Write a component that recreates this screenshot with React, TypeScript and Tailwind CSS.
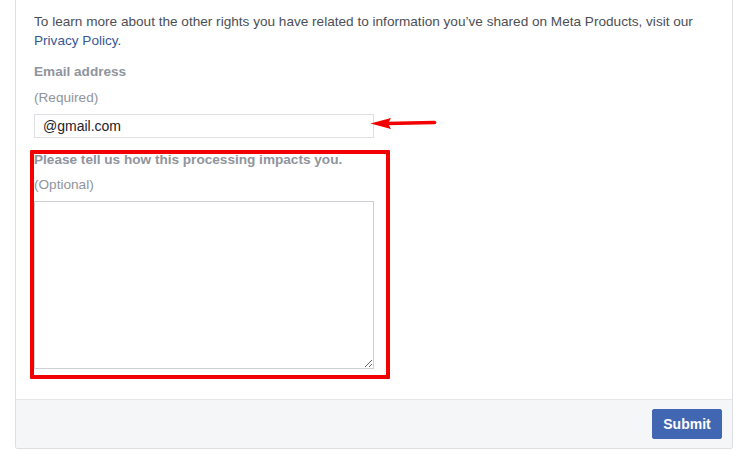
import React from 'react';

const font = { fontFamily: '"Liberation Sans", Arial, Helvetica, sans-serif' };

function Arrow() {
  return (
    <svg
      className="absolute left-[368px] top-[114px]"
      width="70"
      height="20"
      viewBox="0 0 70 20"
    >
      <path d="M 18 9.5 L 66.5 8.5" stroke="#f20000" strokeWidth="3.6" strokeLinecap="round" fill="none" />
      <path d="M 2.5 9.5 L 23 4 L 20 9.5 L 23 15 Z" fill="#f20000" />
    </svg>
  );
}

export default function App() {
  return (
    <div className="min-h-[467px] w-[750px] bg-white" style={font}>
      <div className="relative ml-[15px] w-[718px] rounded-b-[3px] border-x border-b border-[#dddfe2]">
        <div className="px-[18px] pt-[12px] pb-[30px] text-[13.6px] leading-[19px]">
          <p className="text-[#4b4f56]">
            To learn more about the other rights you have related to information you’ve shared on Meta Products, visit our{' '}
            <a className="text-[#385898]">Privacy Policy</a>.
          </p>

          <div className="mt-[12px] font-bold text-[#90949c]">Email address</div>
          <div className="mt-[7px] text-[#90949c]">(Required)</div>
          <input
            readOnly
            value="@gmail.com"
            className="mt-[7px] block h-[24px] w-[340px] border border-[#dddfe2] bg-white px-[8px] text-[14px] text-[#1d2129] outline-none"
          />

          <div className="mt-[12px] font-bold text-[#90949c]">Please tell us how this processing impacts you.</div>
          <div className="mt-[6px] text-[#90949c]">(Optional)</div>
          <textarea className="mt-[7px] block h-[168px] w-[340px] border border-[#ccd0d5] bg-white p-[4px] text-[14px] outline-none" />
        </div>

        <div className="flex justify-end rounded-b-[3px] border-t border-[#e5e6e9] bg-[#f5f6f7] px-[10px] py-[9px]">
          <button className="h-[30px] w-[70px] rounded-[2px] border border-[#4267b2] bg-[#4267b2] text-[14px] font-bold text-white">
            Submit
          </button>
        </div>

        {/* annotation overlays */}
        <div className="pointer-events-none absolute left-[14px] top-[150px] h-[229px] w-[360px] rounded-[1px] border-[4px] border-[#f20000]" />
      </div>
      <div className="pointer-events-none absolute left-0 top-0">
        <Arrow />
      </div>
    </div>
  );
}
